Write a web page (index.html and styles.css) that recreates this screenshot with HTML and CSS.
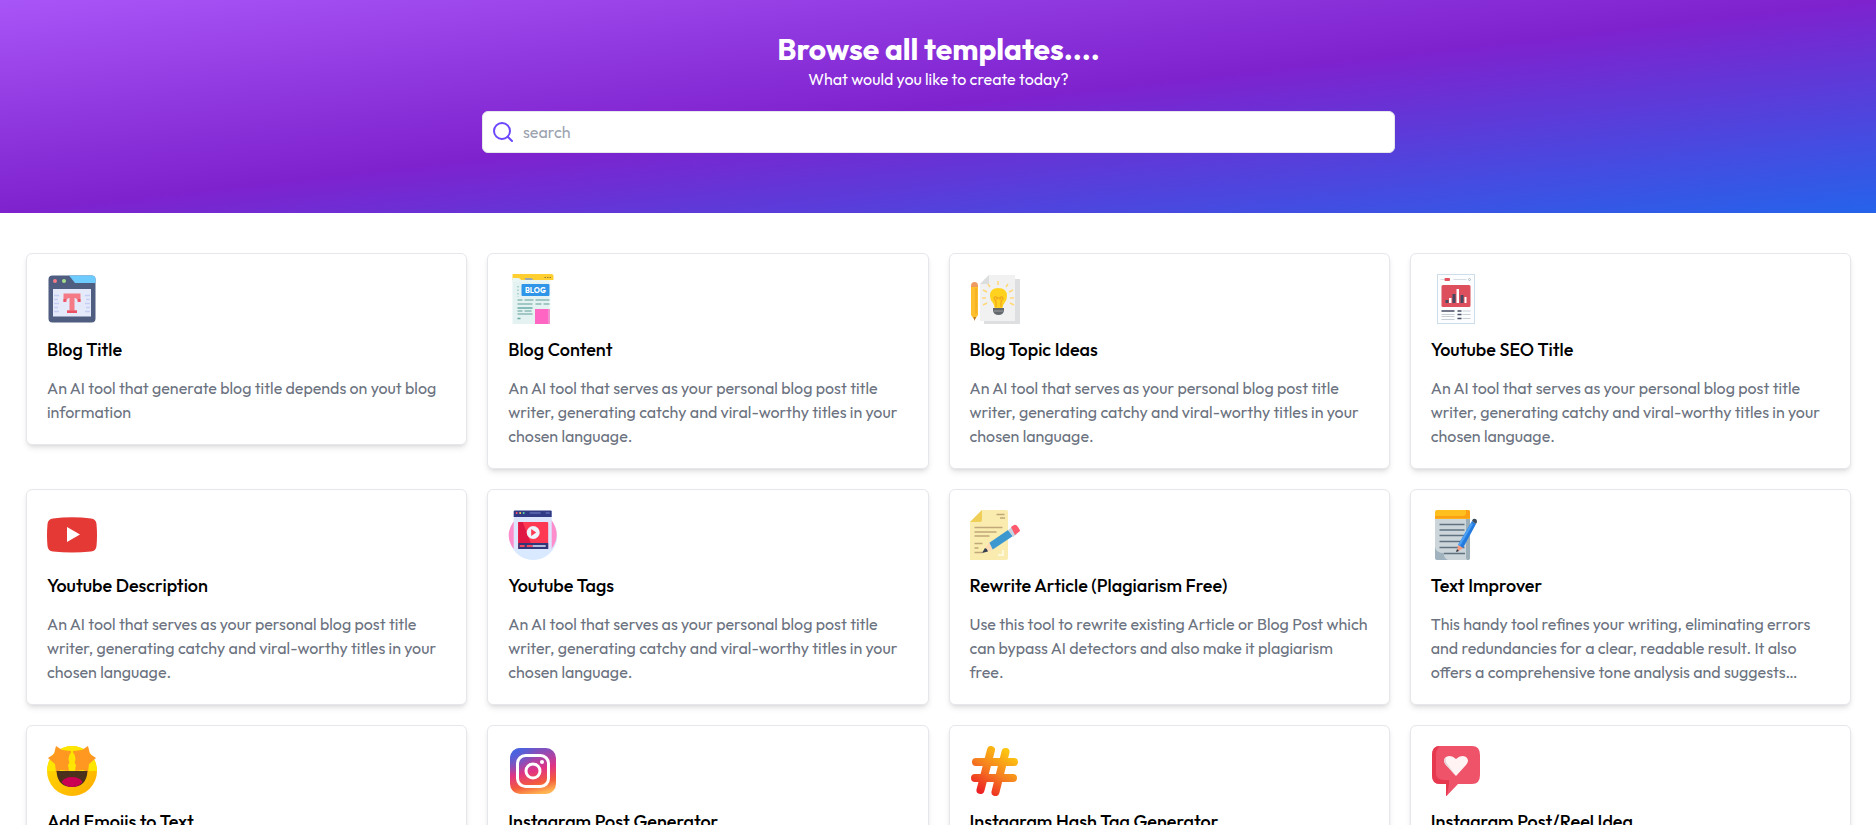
FILE: index.html
```html
<!DOCTYPE html>
<html lang="en">
<head>
<meta charset="utf-8">
<title>Browse all templates</title>
<link rel="stylesheet" href="styles.css">
</head>
<body>
<header class="hero">
  <h1 class="hero-title">Browse all templates....</h1>
  <p class="hero-sub">What would you like to create today?</p>
  <div class="search">
    <svg class="search-icon" viewBox="0 0 24 24" width="24" height="24" fill="none" stroke="#6c47ff" stroke-width="2" stroke-linecap="round" stroke-linejoin="round"><circle cx="11" cy="11" r="8"/><path d="m21 21-4.3-4.3"/></svg>
    <input class="search-input" type="text" placeholder="search">
  </div>
</header>
<main class="grid">
  <article class="card">
    <svg class="icon" viewBox="0 0 50 50"><rect x="1.500" y="1.500" width="47" height="47" rx="4" fill="#4f5d80"/><path d="M22 1.500h23q3.500 0 3.500 3.500v4H28z" fill="#6dcbff"/><circle cx="8" cy="7" r="2" fill="#f47b86"/><circle cx="17" cy="7" r="2" fill="#a5de8b"/><rect x="6" y="15" width="38" height="27.500" fill="#e5eafa"/><path d="M7 21.500h5m-5 4h4m-4 4h5m-5 4h4m-4 4h5M38 21.500h5m-4 4h4m-5 4h5m-4 4h4m-5 4h5" stroke="#c3cff3" stroke-width="1.500"/><path d="M16.500 19.500h17v8.500h-3q0-4-3-4v12.500h2.500v2.500h-10v-2.500h2.500V24q-3 0-3 4h-3z" fill="#f47b86"/><path d="M20 36.500h10V39H20zM16.500 25h2.500l-.5 3h-2zM31 25h2.500v3h-2z" fill="#ea5265"/></svg>
    <h2 class="card-title">Blog Title</h2>
    <p class="card-text">An AI tool that generate blog title depends on yout blog<br>information</p>
  </article>
  <article class="card">
    <svg class="icon" viewBox="-.5 0 50 50"><rect x="4" y="5" width="37" height="45" fill="#e4f3f1"/><path d="M4 0h39q2 0 2 2v4H4z" fill="#ffcf32"/><path d="M4 8V4h5.500q2 0 3 2H41v2z" fill="#e9f5f2"/><path d="M16 4h7l2 2h-8z" fill="#9ca9af"/><path d="M36 3.500h1.500m1 0H40m1 0h1.500" stroke="#937a3a"/><path d="M41 6h1v29h-1z" fill="#f2f8f7"/><path d="M9.500 12v11" stroke="#9ccbc7" stroke-width="1.500" stroke-dasharray="1.500 2"/><rect x="13" y="10" width="28" height="12" rx="1" fill="#2e95e8"/><text x="27" y="19" class="blog-label" text-anchor="middle" textLength="21" lengthAdjust="spacingAndGlyphs">BLOG</text><path d="M9 26h5m2 0h9M9 30h15m-15 7h5m2 0h7M9 40h15M27 26h14m-14 4h6m2 0h6" stroke="#8cbab7" stroke-width="1.500"/><path d="M9 34h15M9 44.500h3" stroke="#67aaa6" stroke-width="1.600"/><rect x="26.500" y="35" width="13" height="15" fill="#ff66c4"/><path d="M39.500 35h2v15h-2z" fill="#ef91ce"/></svg>
    <h2 class="card-title">Blog Content</h2>
    <p class="card-text">An AI tool that serves as your personal blog post title<br>writer, generating catchy and viral-worthy titles in your<br>chosen language.</p>
  </article>
  <article class="card">
    <svg class="icon" viewBox="0 0 50 50"><path d="M14 5h36v45H14z" fill="#dedfe1"/><path d="M19 1h26v46H10V10z" fill="#f1f1f2"/><path d="M19 1v9h-9z" fill="#dcddde"/><path d="M1 11h7v30l-3.500 5L1 41z" fill="#ffc02e"/><path d="M1 12q0-4 3.500-4T8 12v1H1z" fill="#ee9b62"/><path d="m3.500 43 1 4 1.500-4" fill="#b5772f"/><path d="M6 14v26" stroke="#efa51f"/><path d="M28 14q-8 0-8 8 0 4 3 7 1.500 2 1.500 5h8q0-3 2-5 2.500-3 2.500-7 0-8-9-8z" fill="#ffd21f"/><path d="M26 33v-5l-2-4q2-3 3 1 1.500-3 3 0 1-4 3-1l-2 4v5" fill="none" stroke="#f0a51d" stroke-width="1.200"/><path d="M23 34h11v3q-1 4-5.500 4T23 37z" fill="#64676b"/><path d="M23.500 37h10" stroke="#9b9ea0"/><path d="M28 11V7m-8 6-2-3m18 3 2-3M17 18l-4-2m26 2 4-2M16 24h-4m28 0h4M17 29l-4 2m27-2 4 2" stroke="#ffd878" stroke-width="1.500"/></svg>
    <h2 class="card-title">Blog Topic Ideas</h2>
    <p class="card-text">An AI tool that serves as your personal blog post title<br>writer, generating catchy and viral-worthy titles in your<br>chosen language.</p>
  </article>
  <article class="card">
    <svg class="icon" viewBox="-.5 0 50 50"><rect x="6" y=".5" width="37" height="49" fill="#fbfdff" stroke="#cddeea"/><path d="M9 5.500h4M22 5.500h13" stroke="#d7dce1"/><rect x="13" y="4" width="5.500" height="3" rx="1" fill="#e45260"/><circle cx="38" cy="5.500" r="1" fill="none" stroke="#98a7b3" stroke-width=".7"/><rect x="10" y="11" width="29" height="22" rx="1.500" fill="#de4f5d"/><path d="M14 26h3v3h-3zM21 20h3v9h-3zM29 21h3v8h-3z" fill="#454960"/><path d="M17.500 24h2.500v5h-2.500zM25 15h2.500v14H25zM33 23h2v6h-2z" fill="#fff"/><path d="M10 37h13M26 37h4M26 40.500h4M26 44.500h4" stroke="#474d62" stroke-width="1.600"/><path d="M10 40.500h13m-13 2h13m-13 3h13M31 37h8m-8 3.500h8m-8 4h8" stroke="#bcc3cc" stroke-width=".8"/></svg>
    <h2 class="card-title">Youtube SEO Title</h2>
    <p class="card-text">An AI tool that serves as your personal blog post title<br>writer, generating catchy and viral-worthy titles in your<br>chosen language.</p>
  </article>
  <article class="card">
    <svg class="icon" viewBox="0 0 50 50"><path d="M6 8.500Q25 6 44 8.500q5 .5 5.500 5.500 1 11 0 22-.5 5-5.500 5.500-19 2-38 0Q1 41 .5 36q-1-11 0-22Q1 9 6 8.500z" fill="#e53935"/><path d="M20 17v15l13-7.500z" fill="#fff"/></svg>
    <h2 class="card-title">Youtube Description</h2>
    <p class="card-text">An AI tool that serves as your personal blog post title<br>writer, generating catchy and viral-worthy titles in your<br>chosen language.</p>
  </article>
  <article class="card">
    <svg class="icon" viewBox="-.7 0 50 50"><defs><clipPath id="disc"><path d="M0 0h50v25a25 25 0 0 1-50 0z"/></clipPath></defs><circle cx="24.500" cy="26" r="24" fill="#d9e9ff"/><path d="M7 9Q-6 24 5 39L11 9M42 9q12 16 0 31" fill="#ff8ccb"/><path d="M5 3h38v37H5z" fill="#dce7ff" clip-path="url(#disc)"/><path d="M5 1.500q0-1 1-1h36q1 0 1 1V7H5z" fill="#313b85"/><circle cx="8" cy="3" r="1" fill="#ff5272"/><circle cx="11.500" cy="3" r="1" fill="#ffd052"/><circle cx="15" cy="3" r="1" fill="#57dba6"/><path d="M21 3h11m5 0h4" stroke="#7584cc"/><rect x="9.500" y="12" width="30" height="27" rx="1" fill="#ff3854"/><path d="M9.500 12H14l8 21H9.500z" fill="#df1745"/><path d="M9.500 33h30v6h-30z" fill="#303878"/><circle cx="24.500" cy="22.500" r="6.500" fill="#edf3ff"/><path d="M22.500 19v7l5-3.500z" fill="#ff3854"/><path d="M11 36h5m2 0h6" stroke="#f34860" stroke-width="1.800"/><path d="M24 36h13" stroke="#e2e9ff" stroke-width="1.500"/></svg>
    <h2 class="card-title">Youtube Tags</h2>
    <p class="card-text">An AI tool that serves as your personal blog post title<br>writer, generating catchy and viral-worthy titles in your<br>chosen language.</p>
  </article>
  <article class="card">
    <svg class="icon" viewBox="0 0 50 50"><path d="M12 0h24q2 0 2 2v46q0 2-2 2H0V12z" fill="#faecaf"/><path d="M12 0v10q0 2-2 2H0z" fill="#efcf58"/><path d="M26.500 4.500h8M30 8h5M4.500 17.500h28M4.500 22h22M4.500 26h15M4.500 33.500h8M4.500 38h4M4.500 42.500h8" stroke="#c0a87a" stroke-width="1.400"/><path d="m19 33 19-13 5 6-21 14z" fill="#3d98d0"/><path d="m38 20 4-3 5 7-4 3z" fill="#c7d3de"/><path d="m41 17 3-2q2-1 4 2t2 4l-5 4z" fill="#ff596d"/><path d="m19 32-7 11 11-3z" fill="#ffdbb6"/><path d="m15 38-3 5 6-1.500q-.5-3-3-3.500z" fill="#344250"/><path d="M33 40v5h-5" fill="none" stroke="#fff9dc" stroke-width="2"/></svg>
    <h2 class="card-title">Rewrite Article (Plagiarism Free)</h2>
    <p class="card-text">Use this tool to rewrite existing Article or Blog Post which<br>can bypass AI detectors and also make it plagiarism<br>free.</p>
  </article>
  <article class="card">
    <svg class="icon" viewBox="-4 0 50 50"><path d="M0 6h35v42q0 2-2 2H9L0 42z" fill="#cbd5da"/><path d="M31 8h4v40q0 2-3 2l-1-2z" fill="#9caeb8"/><path d="M0 9V2q0-2 2-2h31q2 0 2 2v7z" fill="#ffc01f"/><path d="M31 0h2q2 0 2 2v6.500H0V6h28q3 0 3-3z" fill="#fba014"/><path d="M4.500 14.500h25m-25 5.500h25m-25 5.500h25m-25 6h25m-25 6h25M9 43.500h21" stroke="#607280" stroke-width="1.500"/><path d="M0 37q1 6 9 6v2q0 3 4 5H2q-2 0-2-2z" fill="#9fb2bd"/><path d="m37 11 4 3-13 24-5-3z" fill="#247bdf"/><path d="m36 13 2 1-13 22-2-1z" fill="#4ca1f5"/><path d="m37 11 1-2q4-1 4 3l-1 2z" fill="#3b4d5d"/><path d="m23 35 5 3-6 4z" fill="#f59c83"/><path d="m22 39 2 2-3 1z" fill="#293746"/></svg>
    <h2 class="card-title">Text Improver</h2>
    <p class="card-text">This handy tool refines your writing, eliminating errors<br>and redundancies for a clear, readable result. It also<br>offers a comprehensive tone analysis and suggests…</p>
  </article>
  <article class="card">
    <svg class="icon" viewBox="0 0 50 50"><defs><linearGradient id="face" x1="0" y1="0" x2="1" y2="1"><stop offset="0" stop-color="#ffe000"/><stop offset="1" stop-color="#ffab00"/></linearGradient></defs><circle cx="25" cy="25" r="25" fill="url(#face)"/><path d="M0 25A25 25 0 0 1 50 25z" fill="#ffe600"/><path d="m9 0 6 4 9 1v9l-3 5 1 6-8-1-5 2-1-8-7-6 6-4zM41 0l-6 4-9 1v9l3 5-1 6 8-1 5 2 1-8 7-6-6-4z" fill="#ff9820"/><path d="M25 5q7 8 0 15-7-7 0-15z" fill="#ffe400"/><path d="M9.500 25h31q-1 16-15.500 16T9.500 25z" fill="#4b301b"/><path d="M14.500 36q3-5 10.500-5t10.500 5q-4 5-10.500 5t-10.500-5z" fill="#ca0052"/></svg>
    <h2 class="card-title">Add Emojis to Text</h2>
    <p class="card-text">An AI tool that serves as your personal blog post title<br>writer, generating catchy and viral-worthy titles in your<br>chosen language.</p>
  </article>
  <article class="card">
    <svg class="icon" viewBox="0 0 50 50"><defs><linearGradient id="insta" x1=".35" y1="0" x2=".6" y2="1"><stop offset="0" stop-color="#6559ce"/><stop offset=".5" stop-color="#e03386"/><stop offset=".78" stop-color="#f45b3c"/><stop offset="1" stop-color="#ffb351"/></linearGradient><radialGradient id="blue" cx="0" cy="0" r=".6"><stop offset="0" stop-color="#3f67e5"/><stop offset="1" stop-color="#3f67e5" stop-opacity="0"/></radialGradient></defs><rect x="2" y="2" width="46" height="46" rx="10" fill="url(#insta)"/><rect x="2" y="2" width="46" height="46" rx="10" fill="url(#blue)"/><rect x="9.500" y="9.500" width="31" height="31" rx="8" fill="none" stroke="#fff" stroke-width="3"/><circle cx="25" cy="25" r="7" fill="none" stroke="#fff" stroke-width="3"/><circle cx="34" cy="16" r="2" fill="#fff"/></svg>
    <h2 class="card-title">Instagram Post Generator</h2>
    <p class="card-text">An AI tool that serves as your personal blog post title<br>writer, generating catchy and viral-worthy titles in your<br>chosen language.</p>
  </article>
  <article class="card">
    <svg class="icon" viewBox="0 0 50 50"><defs><linearGradient id="hash" gradientUnits="userSpaceOnUse" x1="10" y1="46" x2="38" y2="5"><stop offset="0" stop-color="#ed2024"/><stop offset=".5" stop-color="#f58020"/><stop offset="1" stop-color="#fdc70f"/></linearGradient></defs><path d="M21 4 10.500 44M35.500 6 25.500 46M6 16h38M5 32h38" fill="none" stroke="url(#hash)" stroke-width="8" stroke-linecap="round"/></svg>
    <h2 class="card-title">Instagram Hash Tag Generator</h2>
    <p class="card-text">An AI tool that serves as your personal blog post title<br>writer, generating catchy and viral-worthy titles in your<br>chosen language.</p>
  </article>
  <article class="card">
    <svg class="icon" viewBox="0 0 50 50"><path d="M9 0h32q8 0 8 9v20q0 9-8 9H27L16 49.500q-1 1-1-1V38H9q-8 0-8-9V9q0-9 8-9z" fill="#ef5369"/><path d="M9 0Q5 3 5 9v18q0 7 8 7h5v4l-2 11.500q-1 1-1-1V38H9q-8 0-8-9V9q0-9 8-9z" fill="#e63950"/><path d="M25 30 15 19q-4-5 0-8 5-3 10 2 5-5 10-2 4 3 0 8z" fill="#fff3f3"/><path d="m25 30-10-11q-4-5 0-8-1 5 2 8z" fill="#e3d5da"/></svg>
    <h2 class="card-title">Instagram Post/Reel Idea</h2>
    <p class="card-text">An AI tool that serves as your personal blog post title<br>writer, generating catchy and viral-worthy titles in your<br>chosen language.</p>
  </article>
</main>
</body>
</html>
```

FILE: styles.css
```css
* { box-sizing: border-box; }
body {
  margin: 0;
  height: 825px;
  overflow: hidden;
  background: #fff;
  color: #000;
  font-family: Outfit, Lato, "Open Sans", sans-serif;
  font-size: 16px;
  line-height: 24px;
}
h1, h2, p { margin: 0; }
.hero {
  height: 213px;
  padding: 31px 0 0 1px;
  display: flex;
  flex-direction: column;
  align-items: center;
  background: linear-gradient(to bottom right, #a855f7, #7e22ce, #2563eb);
  color: #fff;
}
.hero-title { font-size: 30px; line-height: 36px; font-weight: 700; white-space: nowrap; }
.hero-sub { white-space: nowrap; }
.search {
  width: 913px;
  height: 42px;
  margin-top: 20px;
  padding: 8px;
  display: flex;
  align-items: center;
  gap: 8px;
  border: 1px solid #e5e7eb;
  border-radius: 6px;
  background: #fff;
}
.search-icon { flex: none; }
.search-input {
  flex: 1;
  height: 24px;
  padding: 0;
  border: 0;
  outline: 0;
  background: transparent;
  font: inherit;
}
.search-input::placeholder { color: #9ca3af; opacity: 1; }
.grid {
  padding: 40px 25px 40px 26px;
  display: grid;
  grid-template-columns: repeat(4, minmax(0, 1fr));
  align-items: start;
  gap: 20px;
}
.card {
  padding: 20px;
  display: flex;
  flex-direction: column;
  gap: 12px;
  border: 1px solid #e5e7eb;
  border-radius: 6px;
  background: #fff;
  box-shadow: 0 4px 6px -1px rgba(0, 0, 0, .1), 0 2px 4px -2px rgba(0, 0, 0, .1);
}
.icon { display: block; width: 50px; height: 50px; }
.card-title { font-size: 18px; line-height: 28px; font-weight: 500; white-space: nowrap; }
.card-text { color: #6b7280; white-space: nowrap; }
.blog-label { font-size: 8px; font-weight: 700; fill: #fff; }
```
